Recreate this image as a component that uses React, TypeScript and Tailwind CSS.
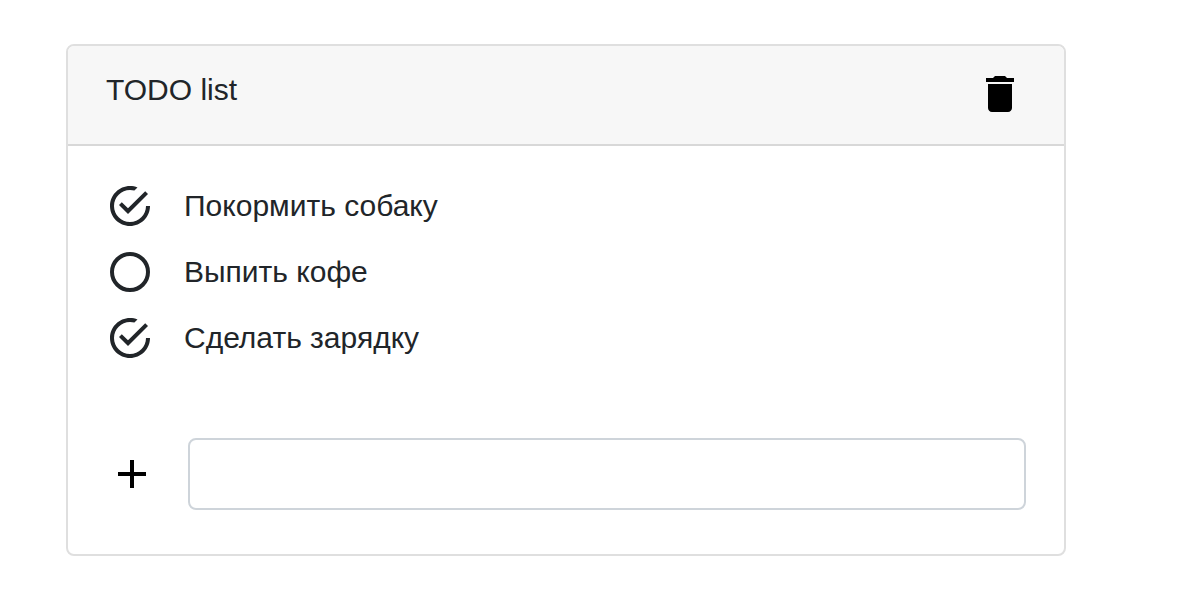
import { useState } from "react";
import type { FormEvent } from "react";

type Item = { id: number; text: string; done: boolean };

const initialItems: Item[] = [
  { id: 1, text: "Покормить собаку", done: true },
  { id: 2, text: "Выпить кофе", done: false },
  { id: 3, text: "Сделать зарядку", done: true },
];

function CheckedIcon() {
  return (
    <svg viewBox="48 48 416 416" className="size-10 shrink-0" fill="currentColor" aria-hidden="true">
      <path d="M170.718 216.482L141.6 245.6l93.6 93.6 208-208-29.118-29.118L235.2 279.918l-64.482-63.436zM422.4 256c0 91.518-74.883 166.4-166.4 166.4S89.6 347.518 89.6 256 164.482 89.6 256 89.6c15.6 0 31.2 2.082 45.764 6.241L334 62.6C310.4 53.2 284 48 256 48 141.6 48 48 141.6 48 256s93.6 208 208 208 208-93.6 208-208h-41.6z" />
    </svg>
  );
}

function EmptyIcon() {
  return (
    <svg viewBox="0 0 40 40" className="size-10 shrink-0" fill="none" stroke="currentColor" strokeWidth="4" aria-hidden="true">
      <circle cx="20" cy="20" r="18" />
    </svg>
  );
}

function DeleteIcon() {
  return (
    <svg viewBox="0 0 24 24" className="size-12" fill="currentColor" aria-hidden="true">
      <path d="M6 19c0 1.1.9 2 2 2h8c1.1 0 2-.9 2-2V7H6v12zM19 4h-3.5l-1-1h-5l-1 1H5v2h14V4z" />
    </svg>
  );
}

function AddIcon() {
  return (
    <svg viewBox="0 0 24 24" className="size-12" fill="currentColor" aria-hidden="true">
      <path d="M19 13h-6v6h-2v-6H5v-2h6V5h2v6h6v2z" />
    </svg>
  );
}

export default function App() {
  const [items, setItems] = useState(initialItems);
  const [draft, setDraft] = useState("");

  const toggle = (id: number) =>
    setItems(items.map((item) => (item.id === id ? { ...item, done: !item.done } : item)));

  const add = (event: FormEvent) => {
    event.preventDefault();
    if (!draft.trim()) return;
    setItems([...items, { id: Date.now(), text: draft.trim(), done: false }]);
    setDraft("");
  };

  return (
    <main className="bg-white pt-11 pr-[126px] pb-11 pl-[66px] font-['Liberation_Sans',Arial,sans-serif] text-[30px] leading-10 text-[#212529]">
      <section className="overflow-hidden rounded-lg border-2 border-[#dfdfdf] bg-white">
        <header className="flex items-start justify-between border-b-2 border-[#d8d8d8] bg-[#f7f7f7] pt-6 pr-10 pb-[26px] pl-[38px]">
          <h1>TODO list</h1>
          <button type="button" aria-label="Delete list" className="text-black" onClick={() => setItems([])}>
            <DeleteIcon />
          </button>
        </header>
        <div className="px-[38px] pt-10 pb-11">
          <ul className="flex flex-col gap-[26px] pl-1">
            {items.map((item) => (
              <li key={item.id} className="flex">
                <label className="relative flex cursor-pointer items-center gap-[34px]">
                  <input
                    type="checkbox"
                    className="sr-only"
                    checked={item.done}
                    onChange={() => toggle(item.id)}
                  />
                  {item.done ? <CheckedIcon /> : <EmptyIcon />}
                  <span>{item.text}</span>
                </label>
              </li>
            ))}
          </ul>
          <form onSubmit={add} className="mt-20 flex items-center gap-8 pl-0.5">
            <button type="submit" aria-label="Add item" className="text-black">
              <AddIcon />
            </button>
            <input
              type="text"
              aria-label="New item"
              value={draft}
              onChange={(event) => setDraft(event.target.value)}
              className="h-[72px] min-w-0 flex-1 rounded-lg border-2 border-[#ced4da] bg-white px-6 outline-none focus:border-[#86b7fe]"
            />
          </form>
        </div>
      </section>
    </main>
  );
}
